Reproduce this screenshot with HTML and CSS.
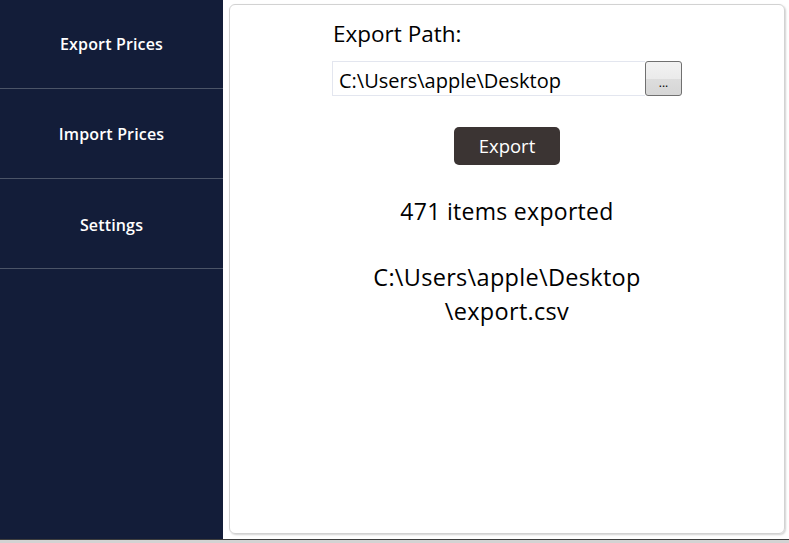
FILE: index.html
```html
<!DOCTYPE html>
<html>
<head>
<meta charset="utf-8">
<link rel="stylesheet" href="styles.css">
</head>
<body>
<div class="window">
  <div class="app">
    <nav class="sidebar">
      <div class="nav-item">Export Prices</div>
      <div class="nav-item">Import Prices</div>
      <div class="nav-item">Settings</div>
    </nav>
    <main class="main">
      <div class="card">
        <div class="column">
          <div class="label">Export Path:</div>
          <div class="path-row">
            <div class="path-input">C:\Users\apple\Desktop</div>
            <div class="browse">...</div>
          </div>
          <div class="export-btn">Export</div>
          <div class="status">471 items exported</div>
          <div class="result">C:\Users\apple\Desktop<br>\export.csv</div>
        </div>
      </div>
    </main>
  </div>
  <div class="bottom"></div>
</div>
</body>
</html>
```
FILE: styles.css
```css
* { box-sizing: border-box; }
html, body { margin: 0; padding: 0; }
body {
  width: 789px;
  height: 543px;
  overflow: hidden;
  font-family: "Open Sans", "Noto Sans", sans-serif;
  background: #d6d6d6;
}
.window { display: flex; flex-direction: column; height: 543px; }
.app { display: flex; height: 539px; }
.bottom { height: 4px; border-top: 1px solid #3d3d3d; background: #d3d3d3; }
.sidebar {
  width: 223px;
  background: #131d39;
  display: flex;
  flex-direction: column;
}
.nav-item {
  height: 90px;
  border-bottom: 1px solid #4b5467;
  color: #ffffff;
  font-weight: 600;
  font-size: 16px;
  letter-spacing: 0.15px;
  display: flex;
  align-items: center;
  justify-content: center;
  padding-top: 1px;
}
.nav-item:first-child { height: 89px; padding-top: 0; }
.nav-item:last-child { padding-top: 2px; }
.main {
  flex: 1;
  background: #ffffff;
  padding: 4px 4px 5px 6px;
  display: flex;
}
.card {
  flex: 1;
  border: 1px solid #d2d2d2;
  border-radius: 6px;
  box-shadow: 1px 1px 2px rgba(0,0,0,0.18);
  display: flex;
  justify-content: center;
  padding-top: 14px;
}
.column {
  width: 350px;
  display: flex;
  flex-direction: column;
  align-items: center;
}
.label {
  align-self: flex-start;
  padding-left: 1px;
  font-size: 22.5px;
  color: #000;
  line-height: 30px;
}
.path-row {
  margin-top: 12px;
  display: flex;
  width: 350px;
  height: 35px;
}
.path-input {
  flex: 1;
  border: 1px solid #e3e6ef;
  border-right: none;
  font-size: 20px;
  line-height: 33px;
  padding-left: 6px;
  padding-top: 2px;
  color: #000;
}
.browse {
  width: 37px;
  border: 1px solid #707070;
  border-radius: 3px;
  background: linear-gradient(#f2f2f2 0%, #ebebeb 50%, #dddddd 50%, #d6d6d6 100%);
  font-size: 12px;
  display: flex;
  align-items: flex-end;
  justify-content: center;
  padding-bottom: 4px;
  color: #000;
}
.export-btn {
  margin-top: 31px;
  width: 106px;
  height: 38px;
  background: #3b3433;
  border-radius: 5px;
  color: #ffffff;
  font-size: 18.5px;
  display: flex;
  align-items: center;
  justify-content: center;
  padding-bottom: 1px;
}
.status {
  margin-top: 31px;
  font-size: 23px;
  letter-spacing: 0.3px;
  line-height: 30px;
  color: #000;
}
.result {
  margin-top: 34px;
  font-size: 23.5px;
  letter-spacing: 0.3px;
  line-height: 34px;
  text-align: center;
  color: #000;
}
```
